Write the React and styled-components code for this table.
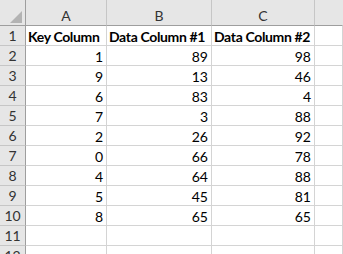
import React from "react";
import styled, { createGlobalStyle } from "styled-components";

const GlobalStyle = createGlobalStyle`
  html, body {
    margin: 0;
    padding: 0;
    background: #ffffff;
  }
  body {
    font-family: "Lato", "Open Sans", sans-serif;
    overflow: hidden;
  }
`;

const colWidths = [26, 81, 105, 103, 28];

const Sheet = styled.div`
  display: grid;
  grid-template-columns: ${colWidths.map(w => `${w}px`).join(" ")};
  grid-auto-rows: 20px;
  grid-template-rows: 26px;
  width: 343px;
  height: 254px;
  overflow: hidden;
  font-size: 14px;
  color: #000;
`;

const Corner = styled.div`
  position: relative;
  background: #e6e6e6;
  border-right: 1px solid #9e9e9e;
  border-bottom: 1px solid #9e9e9e;
  box-sizing: border-box;
`;

const CornerTriangle = styled.div`
  position: absolute;
  left: 10px;
  top: 11px;
  width: 0;
  height: 0;
  border-left: 12px solid transparent;
  border-bottom: 12px solid #b3b3b3;
`;

const ColHead = styled.div`
  display: flex;
  align-items: center;
  justify-content: center;
  padding-top: 5px;
  background: #e6e6e6;
  border-right: 1px solid ${p => (p.$last ? "transparent" : "#c6c6c6")};
  border-bottom: 1px solid #9e9e9e;
  box-sizing: border-box;
  font-size: 14px;
  color: #333;
`;

const RowHead = styled.div`
  display: flex;
  align-items: center;
  justify-content: center;
  background: #e6e6e6;
  border-right: 1px solid #9e9e9e;
  border-bottom: 1px solid #c6c6c6;
  box-sizing: border-box;
  font-size: 14px;
  color: #333;
`;

const Cell = styled.div`
  display: flex;
  align-items: center;
  justify-content: ${p => (p.$num ? "flex-end" : "flex-start")};
  padding: 1px 3px 0 2px;
  border-right: 1px solid #d4d4d4;
  border-bottom: 1px solid #d4d4d4;
  box-sizing: border-box;
  font-weight: ${p => (p.$bold ? 700 : 400)};
  letter-spacing: ${p => (p.$bold ? "-0.35px" : "0")};
  white-space: nowrap;
  overflow: hidden;
`;

const headers = ["Key Column", "Data Column #1", "Data Column #2"];
const rows = [
  [1, 89, 98],
  [9, 13, 46],
  [6, 83, 4],
  [7, 3, 88],
  [2, 26, 92],
  [0, 66, 78],
  [4, 64, 88],
  [5, 45, 81],
  [8, 65, 65],
];

const App = () => {
  return (
    <>
      <GlobalStyle />
      <Sheet>
        <Corner>
          <CornerTriangle />
        </Corner>
        {["A", "B", "C", ""].map((l, i) => (
          <ColHead key={l + i} $last={i === 3}>
            {l}
          </ColHead>
        ))}

        <RowHead>1</RowHead>
        {headers.map(h => (
          <Cell key={h} $bold>
            {h}
          </Cell>
        ))}
        <Cell />

        {rows.map((r, i) => (
          <React.Fragment key={i}>
            <RowHead>{i + 2}</RowHead>
            {r.map((v, j) => (
              <Cell key={j} $num>
                {v}
              </Cell>
            ))}
            <Cell />
          </React.Fragment>
        ))}

        {[11, 12].map(n => (
          <React.Fragment key={n}>
            <RowHead>{n}</RowHead>
            <Cell />
            <Cell />
            <Cell />
            <Cell />
          </React.Fragment>
        ))}
      </Sheet>
    </>
  );
};

export default App;
